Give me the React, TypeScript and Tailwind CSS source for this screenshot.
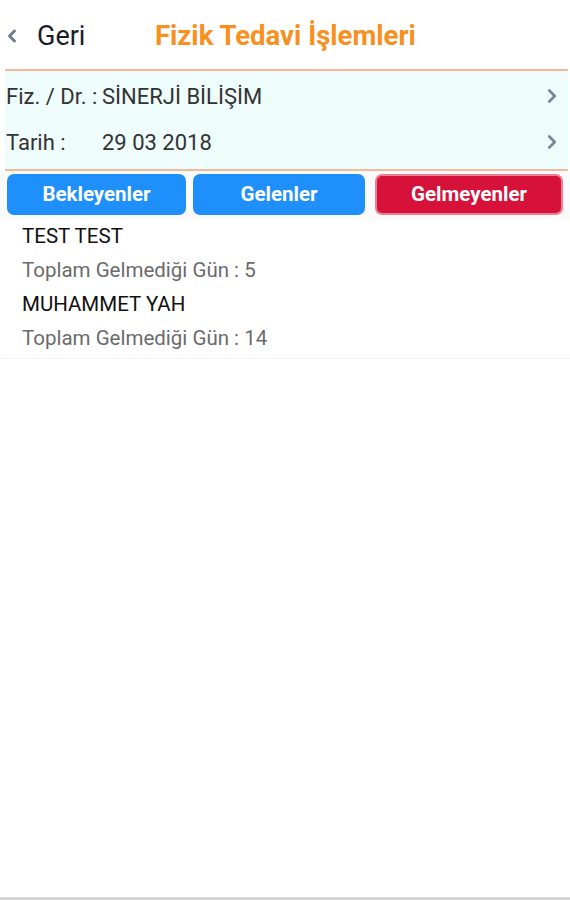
import {ChevronLeft, ChevronRight} from 'lucide-react';

const patients = [
    {name: 'TEST TEST', days: 5},
    {name: 'MUHAMMET YAH', days: 14}
];

const InfoRow: React.FC<{label: string; value: string}> = ({label, value}) => (
    <div className="flex h-[46px] items-center">
        <span className="w-[97px] shrink-0 pl-[1px]">{label}</span>
        <span className="flex-1">{value}</span>
        <ChevronRight className="mr-[5px] h-[22px] w-[22px] text-[#7b8794]" strokeWidth={3} />
    </div>
);

export default function App() {
    return (
        <div className="flex h-[900px] w-[570px] flex-col bg-white font-['Roboto',sans-serif]">
            <header className="relative flex h-[69px] items-center pt-[3px]">
                <div className="flex items-center pl-[2px]">
                    <ChevronLeft className="h-5 w-5 text-[#6b7c8e]" strokeWidth={3.5} />
                    <span className="ml-[15px] text-[27px] text-[#1c1c2a]">Geri</span>
                </div>
                <h1 className="absolute left-[155px] text-[27.5px] font-bold text-[#f7901e]">
                    Fizik Tedavi İşlemleri
                </h1>
            </header>

            <section className="mr-[2px] ml-[5px] border-y-2 border-[#f4b99a] bg-[#effcfc] pt-[2px] pb-[4px] text-[22px] text-[#333]">
                <InfoRow label="Fiz. / Dr. :" value="SİNERJİ BİLİŞİM" />
                <InfoRow label="Tarih :" value="29 03 2018" />
            </section>

            <div className="flex bg-[#fafafa] pt-[3px] pb-[5px] pl-[7px] text-[20.5px] font-bold text-white">
                <button className="h-[41px] w-[179px] rounded-[7px] bg-[#1e8ffb]">Bekleyenler</button>
                <button className="ml-[7px] h-[41px] w-[172px] rounded-[7px] bg-[#1e8ffb]">Gelenler</button>
                <button className="ml-[10px] h-[41px] w-[188px] rounded-[7px] border-2 border-[#ee7f93] bg-[#d7123a]">
                    Gelmeyenler
                </button>
            </div>

            <ul className="border-b border-[#f3f3f3] pb-[2px] pl-[22px]">
                {patients.map(p => (
                    <li key={p.name}>
                        <div className="flex h-[33px] items-center text-[20.5px] text-[#111]">{p.name}</div>
                        <div className="flex h-[35px] items-center text-[20.5px] text-[#6b6b6b]">
                            Toplam Gelmediği Gün : {p.days}
                        </div>
                    </li>
                ))}
            </ul>

            <div className="flex-1" />
            <div className="h-[3px] bg-[#d4d4d4]" />
        </div>
    );
}
